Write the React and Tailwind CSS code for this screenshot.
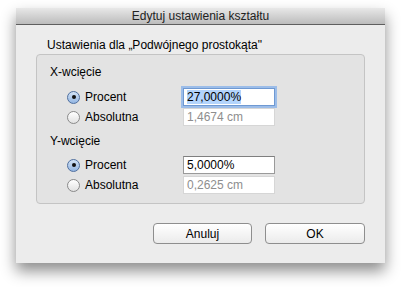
import React from "react";

function Radio({ checked }) {
  return (
    <span
      className={
        "flex h-[13px] w-[13px] shrink-0 items-center justify-center rounded-full border " +
        (checked
          ? "border-[#4f6f9f] bg-gradient-to-b from-[#d3e3f6] to-[#94b6e2]"
          : "border-[#8a8a8a] bg-gradient-to-b from-[#ffffff] to-[#e2e2e2]")
      }
    >
      {checked && <span className="h-[4px] w-[4px] rounded-full bg-[#111]" />}
    </span>
  );
}

function Row({ checked, label, value, focused, disabled }) {
  return (
    <div className="flex h-[18px] items-center">
      <div className="flex w-[134px] items-center gap-[5px] pl-[18px]">
        <Radio checked={checked} />
        <span className="text-[12px] text-black">{label}</span>
      </div>
      <div
        className={
          "flex h-[18px] w-[92px] items-center border px-[3px] text-[12px] " +
          (focused
            ? "border-[#6f99d2] bg-white shadow-[0_0_0_2px_#9cbde9]"
            : disabled
            ? "border-[#d6d6d6] bg-white text-[#8e8e8e]"
            : "border-[#9a9a9a] border-t-[#7f7f7f] bg-white text-black")
        }
      >
        {focused ? <span className="bg-[#b3d4fc] leading-[14px]">{value}</span> : value}
      </div>
    </div>
  );
}

export default function App() {
  return (
    <div
      className="h-[287px] w-[401px] bg-white pl-[16px] pt-[8px]"
      style={{ fontFamily: '"Liberation Sans", Arial, sans-serif' }}
    >
      <div className="flex h-[255px] w-[369px] flex-col bg-[#ececec] shadow-[0_8px_14px_rgba(0,0,0,0.45)]">
        <div className="flex h-[17px] shrink-0 items-center justify-center border-b border-[#5e5e5e] bg-gradient-to-b from-[#e8e8e8] to-[#bcbcbc] text-[12px] text-[#222]">
          Edytuj ustawienia kształtu
        </div>
        <div className="pl-[20px] pt-[12px]">
          <div className="pl-[11px] text-[12px] leading-[16px] text-black">
            Ustawienia dla „Podwójnego prostokąta"
          </div>
          <div className="mt-[1px] flex h-[150px] w-[329px] flex-col rounded-[4px] border border-[#c4c4c4] bg-[#e3e3e3] pl-[12px] pt-[9px]">
            <div className="pl-[1px] text-[12px] leading-[16px] text-black">X-wcięcie</div>
            <div className="mt-[8px] flex flex-col gap-[2px]">
              <Row checked label="Procent" value="27,0000%" focused />
              <Row label="Absolutna" value="1,4674 cm" disabled />
            </div>
            <div className="mt-[7px] pl-[1px] text-[12px] leading-[16px] text-black">Y-wcięcie</div>
            <div className="mt-[7px] flex flex-col gap-[2px]">
              <Row checked label="Procent" value="5,0000%" />
              <Row label="Absolutna" value="0,2625 cm" disabled />
            </div>
          </div>
          <div className="mt-[19px] flex w-[329px] justify-end gap-[13px]">
            <button className="h-[21px] w-[99px] rounded-[4px] border border-[#8e8e8e] bg-gradient-to-b from-[#ffffff] to-[#ebebeb] text-[12px] text-black">
              Anuluj
            </button>
            <button className="h-[21px] w-[100px] rounded-[4px] border border-[#8e8e8e] bg-gradient-to-b from-[#ffffff] to-[#ebebeb] text-[12px] text-black">
              OK
            </button>
          </div>
        </div>
      </div>
    </div>
  );
}
